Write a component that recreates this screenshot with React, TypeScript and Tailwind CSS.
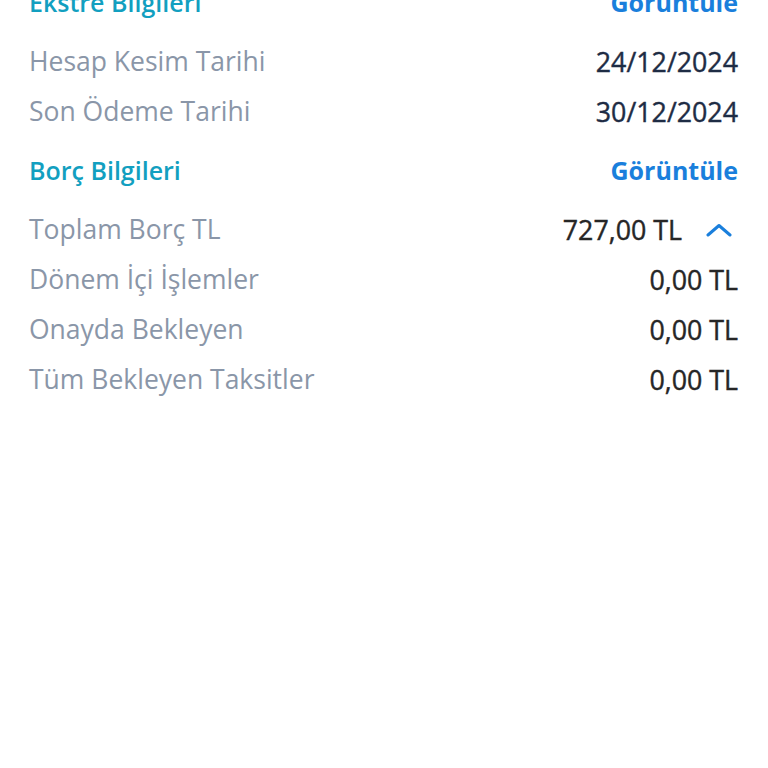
import React from 'react';

interface Row {
  label: string;
  value: string;
  tone: 'date' | 'amount';
  expandable?: boolean;
}

const sections: { title: string; rows: Row[] }[] = [
  {
    title: 'Ekstre Bilgileri',
    rows: [
      { label: 'Hesap Kesim Tarihi', value: '24/12/2024', tone: 'date' },
      { label: 'Son Ödeme Tarihi', value: '30/12/2024', tone: 'date' },
    ],
  },
  {
    title: 'Borç Bilgileri',
    rows: [
      { label: 'Toplam Borç TL', value: '727,00 TL', tone: 'amount', expandable: true },
      { label: 'Dönem İçi İşlemler', value: '0,00 TL', tone: 'amount' },
      { label: 'Onayda Bekleyen', value: '0,00 TL', tone: 'amount' },
      { label: 'Tüm Bekleyen Taksitler', value: '0,00 TL', tone: 'amount' },
    ],
  },
];

const ChevronUp = () => (
  <svg width="32" height="14" viewBox="0 0 32 14" fill="none" className="ml-[24px]">
    <path d="M2 12L13 2.5L24 12" stroke="#1a7fdc" strokeWidth="3" strokeLinecap="round" strokeLinejoin="round" />
  </svg>
);

export default function App() {
  return (
    <div
      className="w-[768px] h-[768px] overflow-hidden bg-white"
      style={{ fontFamily: '"Open Sans", sans-serif' }}
    >
      <div className="-mt-[31px] pl-[29px] pr-[30px]">
        {sections.map((section) => (
          <div key={section.title}>
            {/* Section header */}
            <div className="h-[68px] flex items-center justify-between">
              <span className="text-[25px] font-semibold text-[#129fc0]">{section.title}</span>
              <span className="text-[25px] font-bold text-[#1a7fdc]">Görüntüle</span>
            </div>
            {section.rows.map((row) => (
              <div key={row.label} className="h-[50px] flex items-center justify-between">
                <span className="text-[26.5px] text-[#8a96a8]">{row.label}</span>
                <span className="flex items-center">
                  <span
                    className={
                      row.tone === 'date'
                        ? 'text-[26.8px] text-[#1e2c44] [-webkit-text-stroke:0.4px_#1e2c44]'
                        : 'text-[26.8px] text-[#262626] [-webkit-text-stroke:0.4px_#262626]'
                    }
                  >
                    {row.value}
                  </span>
                  {row.expandable && <ChevronUp />}
                </span>
              </div>
            ))}
          </div>
        ))}
      </div>
    </div>
  );
}
